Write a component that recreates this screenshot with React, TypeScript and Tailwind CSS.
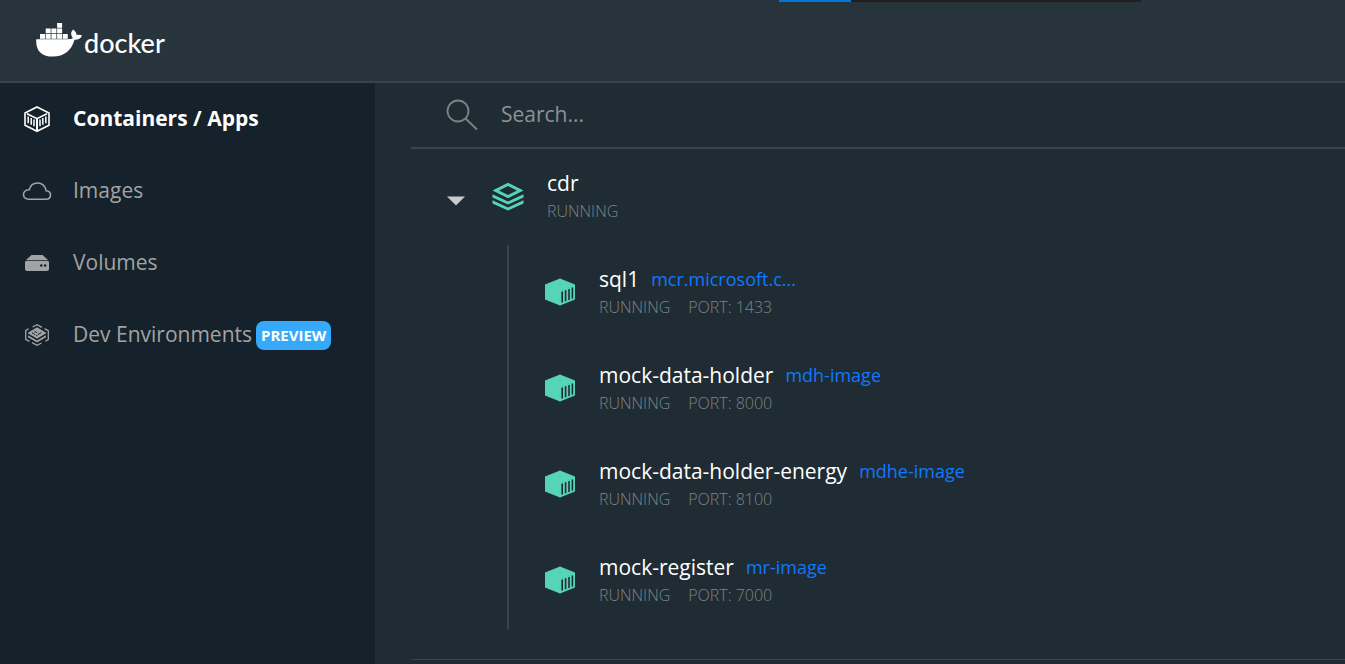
import type { ReactNode } from "react";

const services = [
  { name: "sql1", image: "mcr.microsoft.c...", port: 1433 },
  { name: "mock-data-holder", image: "mdh-image", port: 8000 },
  { name: "mock-data-holder-energy", image: "mdhe-image", port: 8100 },
  { name: "mock-register", image: "mr-image", port: 7000 },
];

function Whale() {
  const boxes = [
    [4, 11], [9.7, 11], [15.4, 11], [21.1, 11], [26.8, 11],
    [9.7, 5.5], [15.4, 5.5], [21.1, 5.5],
    [21.1, 0],
  ];
  return (
    <svg width="46" height="34" viewBox="0 0 46 34" fill="#fff" aria-hidden="true">
      {boxes.map(([x, y]) => (
        <rect key={`${x}-${y}`} x={x} y={y} width="5" height="4.800" />
      ))}
      <path d="M.3 16.300H31.500c2.600 0 4.600-.4 5.400-1.200-2.400-2.800-2.300-6.200.3-8.500 2 1.600 3.200 3.300 3.400 5.400 2-.5 4-.3 5.400.5-1.200 3-3.700 4.400-7.500 4.300C35.500 27.500 28 33.600 17 33.600 5.500 33.600-.6 27.500.3 16.300z" />
    </svg>
  );
}

function ContainersIcon() {
  return (
    <svg width="28" height="28" viewBox="0 0 28 28" fill="none" stroke="#fff" strokeWidth="1.600" aria-hidden="true">
      <path d="M14 2 26 8v12.300L14 26.300 2 20.300V8z" />
      <path d="M4 8.700 14 13.700l10-5" />
      <path d="M14 13.500V25" strokeWidth="2" />
      <path d="M5.200 11.500v6.700M8.200 13v6.700M11 14.500v6.700M17 14.500v6.700M19.800 13v6.700M22.800 11.500v6.700" strokeWidth="1.500" />
    </svg>
  );
}

function CloudIcon() {
  return (
    <svg width="30" height="20" viewBox="0 0 30 20" fill="none" stroke="#a3a3a3" strokeWidth="1.600" aria-hidden="true">
      <path d="M6.500 18.200h17.300c2.800 0 4.700-1.800 4.700-4.200 0-2.500-1.900-4.200-4.400-4.300C23.600 5 20 2 15.600 2 11.600 2 8.300 4.500 7.200 8.700 4 8.600 1.500 10.600 1.500 13.600c0 2.800 2.200 4.600 5 4.600z" />
    </svg>
  );
}

function VolumesIcon() {
  return (
    <svg width="24" height="18" viewBox="0 0 24 18" fill="#a3a3a3" aria-hidden="true">
      <path d="M6.500 1h11L23 6H1z" />
      <path fillRule="evenodd" d="M1.500 6.800h21A1.500 1.500 0 0 1 24 8.300V15a2 2 0 0 1-2 2H2a2 2 0 0 1-2-2V8.300a1.500 1.500 0 0 1 1.500-1.500zM15 11.500a1.300 1.300 0 1 0 2.600 0 1.300 1.300 0 1 0-2.600 0zM18.800 11.500a1.300 1.300 0 1 0 2.600 0 1.300 1.300 0 1 0-2.600 0z" />
    </svg>
  );
}

function DevIcon() {
  return (
    <svg width="26" height="24" viewBox="0 0 26 24" fill="none" stroke="#a3a3a3" strokeWidth="1.300" aria-hidden="true">
      <path d="M8.500 4 13 1.700l5 2.600M20.500 5.600l3.800 2v9l-3 1.600M17.500 20 13 22.300 8 19.700M5.500 18.400l-3.800-2v-9l3-1.600" />
      <path d="M13 4.300 22.500 10 13 15.800 3.500 10z" fill="#a3a3a3" stroke="none" />
      <path d="M4 12.200v2l9 5.300 9-5.300v-2L13 17.500z" fill="#a3a3a3" stroke="none" />
      <path d="M8 9.700l3.200 2M10.500 8.200l2.800 1.700M14 11.500l3.500-2M12 13l1.500-.9" stroke="#15222b" strokeWidth="1" />
    </svg>
  );
}

function StackIcon() {
  return (
    <svg width="32" height="30" viewBox="0 0 32 30" fill="#56d4b6" aria-hidden="true">
      <path fillRule="evenodd" d="M16 .8 31.500 8.500 16 16.300.5 8.500zM16 4 7 8.500l9 4.500 9-4.500z" />
      <path d="M.5 12.300v3.200L16 22.600l15.500-7.100v-3.200L16 19.400z" />
      <path d="M.5 18.300v3.200L16 28.600l15.500-7.100v-3.200L16 25.400z" />
    </svg>
  );
}

function CubeIcon() {
  return (
    <svg width="30" height="28" viewBox="0 0 30 28" className="mb-0.5 shrink-0" aria-hidden="true">
      <path d="M15 .5 30 6.500v15L15 27.500 0 21.500v-15z" fill="#56d4b6" />
      <path d="M17.200 13.500v11M20.600 12.200v11M24 10.900v11M27.400 9.600v11" stroke="#202c33" strokeWidth="1.600" />
    </svg>
  );
}

function NavItem({ icon, label, active, badge }: { icon: ReactNode; label: string; active?: boolean; badge?: string }) {
  return (
    <li>
      <a href="#" aria-current={active ? "page" : undefined} className="flex h-18 items-center pl-[22px]">
        <span className="mr-[21px] flex w-[30px] justify-center">{icon}</span>
        <span className={active ? "pb-0.5 font-bold text-white" : "pb-0.5 text-[#a3a3a3]"}>{label}</span>
        {badge && (
          <span className="ml-1 rounded-lg bg-[#36a9fb] px-[5px] text-[15px] leading-[29px] font-bold text-white">{badge}</span>
        )}
      </a>
    </li>
  );
}

export default function App() {
  return (
    <div className="flex min-h-screen flex-col bg-[#202c33] font-['Open_Sans',sans-serif] text-[21px] leading-7 text-white">
      <header className="relative flex h-[83px] items-center border-b-2 border-[#37444b] bg-[#27343b] pl-9">
        <div className="absolute top-0 left-[779px] flex h-0.5 w-[362px] bg-[#1f1f1f]">
          <div className="w-[72px] bg-[#0078d7]" />
        </div>
        <a href="#" className="flex items-center pb-0.5">
          <Whale />
          <span className="ml-0.5 pt-1.5 font-[Lato,sans-serif] text-[27px] font-medium">docker</span>
        </a>
      </header>
      <div className="flex grow">
        <nav className="w-[375px] shrink-0 bg-[#15222b]">
          <ul>
            <NavItem icon={<ContainersIcon />} label="Containers / Apps" active />
            <NavItem icon={<CloudIcon />} label="Images" />
            <NavItem icon={<VolumesIcon />} label="Volumes" />
            <NavItem icon={<DevIcon />} label="Dev Environments" badge="PREVIEW" />
          </ul>
        </nav>
        <main className="min-w-0 grow pl-9">
          <label className="flex h-[66px] items-center border-b-2 border-[#37444b] pl-[35px]">
            <svg width="32" height="32" viewBox="0 0 32 32" fill="none" stroke="#7b8388" strokeWidth="1.800" aria-hidden="true">
              <circle cx="12" cy="12" r="10.500" />
              <path d="M19.500 19.500 31 30.500" />
            </svg>
            <input type="search" aria-label="Search" placeholder="Search..." className="ml-[23px] min-w-0 grow bg-transparent pb-0.5 outline-none placeholder:text-[#8c9296]" />
          </label>
          <section className="border-b border-[#37444b] pb-[30px]">
            <div className="flex h-24 items-center pl-9">
              <button type="button" aria-label="Collapse cdr" className="pt-2">
                <svg width="18" height="10" viewBox="0 0 18 10" fill="#c9c9c9" aria-hidden="true">
                  <path d="M0 .5h18L9 9.500z" />
                </svg>
              </button>
              <span className="mr-[23px] ml-[27px]"><StackIcon /></span>
              <div>
                <h2>cdr</h2>
                <p className="text-[16px] font-light text-[#7d8588]">RUNNING</p>
              </div>
            </div>
            <ul className="ml-24 border-l-2 border-[#37444b]">
              {services.map((s) => (
                <li key={s.name} className="flex h-24 items-center pl-9">
                  <CubeIcon />
                  <div className="ml-6">
                    <div className="flex gap-3">
                      <h3>{s.name}</h3>
                      <a href="#" className="text-[18px] text-[#0f78ff]">{s.image}</a>
                    </div>
                    <p className="flex gap-[18px] text-[16px] font-light text-[#7d8588]">
                      <span>RUNNING</span>
                      <span>PORT: {s.port}</span>
                    </p>
                  </div>
                </li>
              ))}
            </ul>
          </section>
        </main>
      </div>
    </div>
  );
}
